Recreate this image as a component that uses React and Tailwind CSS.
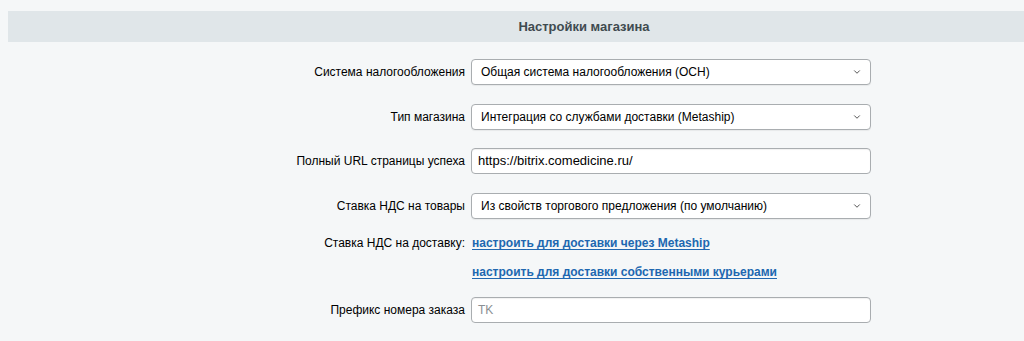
import { ChevronDown } from 'lucide-react'

const FONT = { fontFamily: '"Liberation Sans", Arial, sans-serif' }

function Row({ label, children, className = '' }) {
  return (
    <div className={`flex items-center ${className}`}>
      <div className="w-[471px] shrink-0 pr-[6px] text-right text-[12px] text-black">{label}</div>
      {children}
    </div>
  )
}

function Select({ value }) {
  return (
    <div className="flex h-[26px] w-[400px] items-center justify-between rounded-[4px] border border-[#a9adb0] bg-white pl-[9px] pr-[8px] text-[12px] text-black shadow-[0_1px_1px_rgba(0,0,0,0.06)]">
      <span>{value}</span>
      <ChevronDown size={10} strokeWidth={2} className="text-[#333]" />
    </div>
  )
}

function Input({ value, muted }) {
  return (
    <div className={`flex h-[26px] w-[400px] items-center rounded-[4px] border border-[#a9adb0] bg-white px-[6px] shadow-[inset_0_1px_1px_rgba(0,0,0,0.06)] ${muted ? 'text-[12px] text-[#8a8f93]' : 'text-[13px] text-black'}`}>
      {value}
    </div>
  )
}

export default function App() {
  return (
    <div className="h-[341px] w-full overflow-hidden bg-[#f5f7f8]" style={FONT}>
      <div className="w-[1160px] pl-[8px] pt-[11px]">
        <div className="flex h-[31px] items-center justify-center bg-[#e0e6e9] text-[13px] font-bold text-[#3f4b50]">
          Настройки магазина
        </div>
      </div>

      <Row label="Система налогообложения" className="mt-[17px]">
        <Select value="Общая система налогообложения (ОСН)" />
      </Row>
      <Row label="Тип магазина" className="mt-[19px]">
        <Select value="Интеграция со службами доставки (Metaship)" />
      </Row>
      <Row label="Полный URL страницы успеха" className="mt-[18px]">
        <Input value="https://bitrix.comedicine.ru/" />
      </Row>
      <Row label="Ставка НДС на товары" className="mt-[19px]">
        <Select value="Из свойств торгового предложения (по умолчанию)" />
      </Row>
      <Row label="Ставка НДС на доставку:" className="mt-[15px] h-[18px]">
        <a href="#" className="pl-[1px] text-[12px] font-bold text-[#2067b0] underline underline-offset-2">
          настроить для доставки через Metaship
        </a>
      </Row>
      <Row label="" className="mt-[11px] h-[18px]">
        <a href="#" className="pl-[1px] text-[12px] font-bold text-[#2067b0] underline underline-offset-2">
          настроить для доставки собственными курьерами
        </a>
      </Row>
      <Row label="Префикс номера заказа" className="mt-[16px]">
        <Input value="TK" muted />
      </Row>
    </div>
  )
}
